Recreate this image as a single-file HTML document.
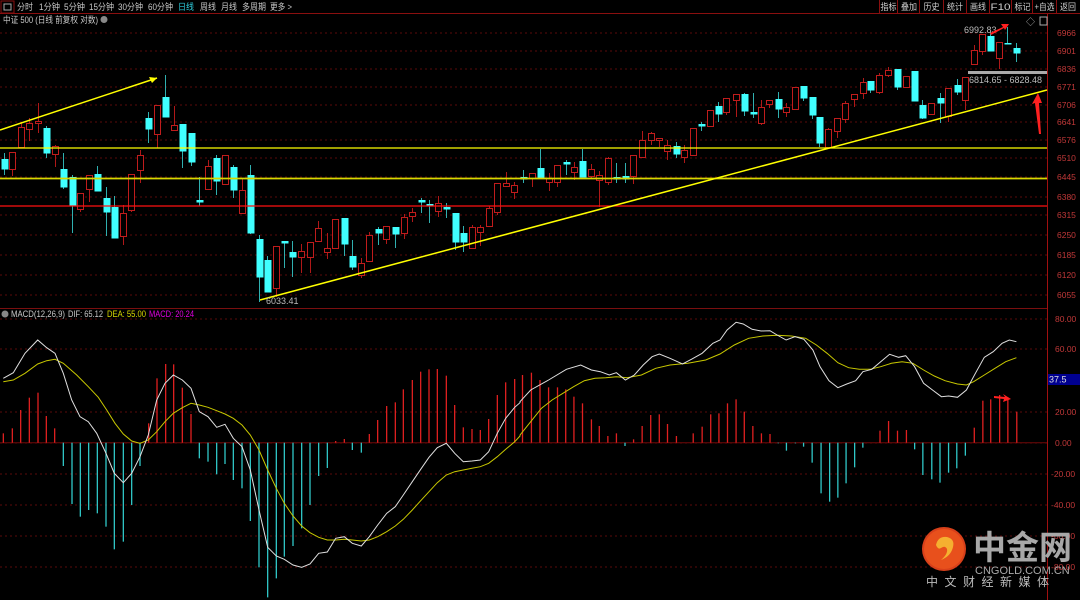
<!DOCTYPE html>
<html><head><meta charset="utf-8"><style>
body{margin:0;background:#000;width:1080px;height:600px;overflow:hidden;font-family:"Liberation Sans","Noto Sans CJK SC",sans-serif}
svg{position:absolute;left:0;top:0}
</style></head><body>
<svg id="s" width="1080" height="600" xmlns="http://www.w3.org/2000/svg" font-family="Liberation Sans, Noto Sans CJK SC, sans-serif">
<rect width="1080" height="600" fill="#000"/>
<line x1="0" y1="13.5" x2="1080" y2="13.5" stroke="#8a0f0f"/>
<rect x="1" y="1" width="13" height="12" fill="none" stroke="#8a0f0f"/>
<rect x="4" y="4" width="7" height="6" fill="none" stroke="#aaa"/>
<g font-size="9" fill="#c8c8c8" lengthAdjust="spacingAndGlyphs">
<text x="17" y="10" textLength="16" lengthAdjust="spacingAndGlyphs">分时</text>
<text x="39" y="10" textLength="21" lengthAdjust="spacingAndGlyphs">1分钟</text>
<text x="64" y="10" textLength="21" lengthAdjust="spacingAndGlyphs">5分钟</text>
<text x="89" y="10" textLength="25" lengthAdjust="spacingAndGlyphs">15分钟</text>
<text x="118" y="10" textLength="25" lengthAdjust="spacingAndGlyphs">30分钟</text>
<text x="148" y="10" textLength="25" lengthAdjust="spacingAndGlyphs">60分钟</text>
<text x="178" y="10" fill="#2fd0e0" textLength="16" lengthAdjust="spacingAndGlyphs">日线</text>
<text x="200" y="10" textLength="16" lengthAdjust="spacingAndGlyphs">周线</text>
<text x="221" y="10" textLength="16" lengthAdjust="spacingAndGlyphs">月线</text>
<text x="242" y="10" textLength="24" lengthAdjust="spacingAndGlyphs">多周期</text>
<text x="270" y="10" textLength="22" lengthAdjust="spacingAndGlyphs">更多 &gt;</text>
<text x="3" y="23" textLength="95" lengthAdjust="spacingAndGlyphs">中证 500 (日线 前复权 对数)</text>
</g>
<circle cx="104" cy="19.5" r="3.5" fill="#888"/>
<g font-size="9" fill="#d0d0d0" id="rtb"></g>
<line x1="0" y1="308.5" x2="1047" y2="308.5" stroke="#7a0f0f"/>
<line x1="1047.5" y1="14" x2="1047.5" y2="600" stroke="#a01010"/>
<g id="grid"></g>
<g id="c"></g>
<line x1="0" y1="148" x2="1047" y2="148" stroke="#ffff00" stroke-width="1.3"/>
<line x1="0" y1="178.5" x2="1047" y2="178.5" stroke="#d8d800" stroke-width="1.8"/>
<line x1="0" y1="206" x2="1047" y2="206" stroke="#ff1010" stroke-width="1.3"/>
<line x1="0" y1="130" x2="157" y2="78" stroke="#ffff00" stroke-width="1.5"/>
<polygon points="157,78 149,77 152,83" fill="#ffff00"/>
<line x1="260" y1="300" x2="1047" y2="90" stroke="#ffff00" stroke-width="1.5"/>
<rect x="968" y="71" width="79" height="3" fill="#aaa"/>
<g font-size="9" fill="#bbb">
<text x="964" y="33">6992.83</text>
<text x="969" y="83">6814.65 - 6828.48</text>
<text x="266" y="304">6033.41</text>
</g>
<polygon points="990,33 1003,27 1001,24 1009,24 1005,30 1004,28 991,35" fill="#ff2020"/>
<polygon points="1039,134 1035,103 1032,104 1038,93 1042,103 1039,103 1041,134" fill="#ff2020"/>
<text x="1026" y="25" font-size="9" fill="#aaa">◇</text>
<rect x="1040" y="17" width="7" height="8" fill="none" stroke="#aaa"/>
<circle cx="5" cy="314" r="3.5" fill="#888"/>
<g font-size="9">
<text x="11" y="317" fill="#c8c8c8" textLength="54" lengthAdjust="spacingAndGlyphs">MACD(12,26,9)</text>
<text x="68" y="317" fill="#c8c8c8" textLength="35" lengthAdjust="spacingAndGlyphs">DIF: 65.12</text>
<text x="107" y="317" fill="#d8d800" textLength="39" lengthAdjust="spacingAndGlyphs">DEA: 55.00</text>
<text x="149" y="317" fill="#e000e0" textLength="45" lengthAdjust="spacingAndGlyphs">MACD: 20.24</text>
</g>
<g id="m"></g>
<rect x="1048" y="374" width="32" height="11" fill="#000090"/>
<text x="1049" y="382.5" font-size="9" fill="#ddd">37.5</text>
<polygon points="994,396 1005,397 1003,394 1011,399 1003,402 1004,399 994,398" fill="#ff2020"/>
<circle cx="944" cy="549" r="22" fill="#d8401a"/>
<circle cx="944" cy="549" r="20" fill="#e8501c"/>
<path d="M936,545 q2,-9 11,-8 q8,2 6,10 q-2,9 -12,13 q7,-6 6,-11 q-2,-4 -6,-1 q-3,2 -5,-3z" fill="#f5b030"/>
<text x="973" y="559" font-size="33" font-weight="bold" fill="#a8a8a8" font-family="Noto Sans CJK SC, sans-serif">中金网</text>
<text x="975" y="574" font-size="11" fill="#aaa">CNGOLD.COM.CN</text>
<text x="926" y="586" font-size="12" fill="#bbb" letter-spacing="6.5" font-family="Noto Sans CJK SC, sans-serif">中文财经新媒体</text>
</svg>
<script>
var NS="http://www.w3.org/2000/svg";
function el(p,t,a,txt){var e=document.createElementNS(NS,t);for(var k in a)e.setAttribute(k,a[k]);if(txt)e.textContent=txt;document.getElementById(p).appendChild(e);return e;}
var tb=[["指标",880,897],["叠加",898,920],["历史",920,943],["统计",944,966],["画线",967,989],["F10",990,1011],["标记",1012,1033],["+自选",1033,1056],["返回",1057,1079]];
tb.forEach(function(b){var w=b[0].length>2?20:(b[0]=="F10"?14:16);el("rtb","text",{x:b[1]+(b[2]-b[1]-w)/2,y:10,textLength:w,lengthAdjust:"spacingAndGlyphs"},b[0]);el("rtb","line",{x1:b[1]-0.5,y1:0,x2:b[1]-0.5,y2:13,stroke:"#8a0f0f"});});
var ax=[[6966,33],[6901,51],[6836,69],[6771,87],[6706,105],[6641,122],[6576,140],[6510,158],[6445,177],[6380,197],[6315,215],[6250,235],[6185,255],[6120,275],[6055,295]];
ax.forEach(function(a){el("grid","line",{x1:0,y1:a[1],x2:1047,y2:a[1],stroke:"#5a0a0a","stroke-dasharray":"2,3"});el("grid","text",{x:1057,y:a[1]+3,"font-size":8.5,fill:"#c03838"},a[0]);});
var mx=[["80.00",319],["60.00",349],["20.00",412],["0.00",443],["-20.00",474],["-40.00",505],["-60.00",536],["-80.00",567]];
mx.forEach(function(a){el("grid","line",{x1:0,y1:a[1],x2:1047,y2:a[1],stroke:"#5a0a0a","stroke-dasharray":"2,3"});el("grid","text",{x:a[0].length>5?1051:1055,y:a[1]+3,"font-size":8.5,fill:"#c03838"},a[0]);});
el("grid","line",{x1:0,y1:442.7,x2:1047,y2:442.7,stroke:"#700808"});
var C=[[4,159,169,153,175,0],[12,152,169,152,176,1],[21,127,147,122,147,1],[29,123,129,118,141,1],[38,121,123,103,133,1],[46,128,153,126,158,0],[55,146,154,145,167,1],[63,169,187,153,189,0],[72,177,206,175,233,0],[80,193,209,193,212,1],[89,175,189,175,202,1],[97,174,191,166,191,0],[106,198,212,187,236,0],[114,207,238,196,238,0],[123,213,236,205,245,1],[131,174,210,174,212,1],[140,155,170,150,183,1],[148,118,129,112,143,0],[157,105,134,105,148,1],[165,97,117,75,117,0],[174,125,130,106,130,1],[182,124,151,124,168,0],[191,133,162,133,166,0],[199,200,202,177,206,0],[208,166,189,160,189,1],[216,158,181,155,195,0],[225,155,184,155,184,1],[233,167,190,165,198,0],[242,190,213,179,213,1],[250,175,233,165,234,0],[259,239,277,235,302,0],[267,260,292,256,292,0],[276,246,288,246,297,1],[284,241,243,241,268,0],[292,252,257,241,277,0],[301,251,257,244,273,1],[310,242,257,242,273,1],[318,228,241,221,241,1],[327,248,252,233,259,1],[335,219,248,219,248,1],[344,218,244,218,256,0],[352,256,267,240,270,0],[361,263,275,258,278,1],[369,235,261,232,261,1],[378,229,233,227,245,0],[386,226,239,226,244,1],[395,227,234,227,248,0],[404,217,233,214,239,1],[412,212,216,208,222,1],[421,200,202,198,213,0],[429,204,206,200,223,0],[438,203,211,196,217,1],[446,207,209,203,218,0],[455,213,242,213,250,0],[463,233,242,226,252,0],[472,227,248,225,248,1],[480,227,232,225,246,1],[489,208,226,206,226,1],[497,183,212,183,215,1],[506,183,186,172,187,1],[514,185,192,182,199,1],[523,177,179,170,183,0],[532,173,178,173,187,1],[540,168,178,149,178,0],[549,178,182,173,191,1],[557,165,182,165,187,1],[566,162,164,160,175,0],[574,167,172,162,180,1],[582,161,177,149,177,0],[591,169,176,164,179,1],[599,175,180,171,207,1],[608,158,182,157,185,1],[616,177,179,163,183,0],[625,176,179,163,183,0],[633,155,176,155,184,1],[642,140,157,131,157,1],[651,133,140,132,145,1],[659,138,140,138,147,1],[667,145,151,140,160,1],[676,146,154,142,158,0],[684,150,157,145,163,1],[693,128,155,128,155,1],[701,124,126,122,131,0],[710,110,126,110,126,1],[718,106,114,102,122,0],[726,98,112,98,115,1],[736,94,100,94,117,1],[744,94,111,93,116,0],[753,112,114,93,118,0],[761,107,123,100,125,1],[769,100,104,100,108,1],[778,99,109,92,118,0],[786,107,112,103,117,1],[795,87,109,87,109,1],[803,86,98,86,101,0],[812,97,115,97,119,0],[819,117,143,117,147,0],[828,129,147,128,147,1],[837,118,131,118,138,1],[845,103,119,101,123,1],[854,94,99,94,107,1],[863,82,93,78,99,1],[870,81,90,81,93,0],[879,75,92,73,94,1],[888,70,75,67,77,1],[897,69,87,69,90,0],[906,76,87,76,87,1],[914,71,101,71,101,0],[922,105,118,100,119,0],[931,103,114,103,114,1],[940,98,103,93,123,0],[948,88,116,88,122,1],[957,85,92,79,95,0],[965,77,100,77,110,1],[974,50,64,45,64,1],[982,34,51,34,55,1],[990,36,51,32,51,0],[999,42,58,42,69,1],[1007,43,44,27,44,0],[1016,48,53,43,62,0]];
C.forEach(function(c){var x=c[0],col=c[5]?"#e02020":"#40ffff",wk=c[5]?"#b01818":"#30b0b0";
el("c","line",{x1:x+0.5,y1:c[3],x2:x+0.5,y2:c[4],stroke:wk});
var h=Math.max(1,c[2]-c[1]);
if(c[5])el("c","rect",{x:x-2.5,y:c[1]+0.5,width:6,height:h,fill:"#000",stroke:"#c01c1c"});
else el("c","rect",{x:x-2.5,y:c[1],width:7,height:h+0.5,fill:col});});
var B1=[[10,370],[37,355],[62,300],[88,263],[114,248],[139,318],[164,355],[190,468],[216,582],[241,620],[266,600],[292,610],[318,650],[343,718],[370,695],[395,585],[420,468],[446,340],[471,205],[497,162],[521,163],[547,233],[573,312],[598,445],[624,455],[650,493],[675,462],[700,510],[726,535],[751,633],[777,772],[803,862],[829,805],[853,740],[879,708],[905,655],[930,585],[956,498],[982,474],[1007,393],[1033,387],[1057,420],[1084,428],[1108,372],[1133,330],[1160,288],[1186,277],[1210,238],[1237,210],[1262,185],[1287,178],[1312,177],[1339,197],[1364,285],[1390,352],[1416,357],[1441,360],[1466,327],[1492,255],[1517,217],[1544,207]];
var B2=[[7,195],[32,188],[56,210],[80,232],[105,232],[128,238],[151,260],[175,280],[200,328],[222,348],[246,378],[270,370],[294,408],[318,388],[342,348],[366,315],[390,313],[413,342],[438,378],[485,370],[510,350],[534,313],[557,310],[581,280],[605,268],[628,305],[652,348],[676,370],[700,372],[723,400],[746,422],[771,400],[794,410],[818,458],[843,550],[867,575],[890,563],[913,520],[937,472],[960,413],[1008,362],[1032,333],[1057,362],[1082,360],[1105,418],[1128,495],[1153,508],[1176,518],[1200,488],[1223,475],[1247,437],[1272,353],[1296,272],[1318,268],[1343,255],[1366,262],[1391,305]];
function bar(x,y){var z=442.7;if(Math.abs(y-z)<0.5)return;var up=y<z;el("m","line",{x1:x,y1:z,x2:x,y2:y,stroke:up?"#e02020":"#30c8c8","stroke-width":1.3});}
B1.forEach(function(b){bar(b[0]/3,310+b[1]/3);});
B2.forEach(function(b){bar(520+b[0]/2.8,310+b[1]/3);});
function pl(a,sx,ox){return a.map(function(q){return (ox+q[0]/sx).toFixed(1)+","+(310+q[1]/3).toFixed(1)}).join(" ");}
var D1=[[10,205],[40,188],[75,130],[113,90],[140,113],[165,130],[190,190],[215,270],[240,320],[265,335],[290,370],[318,430],[343,490],[370,518],[395,490],[420,440],[445,375],[470,270],[495,220],[520,195],[547,210],[573,235],[598,305],[624,320],[650,352],[675,343],[700,385],[726,410],[751,480],[777,600],[803,712],[829,738],[853,748],[879,765],[905,772],[930,762],[956,730],[982,726],[1007,685],[1033,680],[1057,700],[1084,708],[1108,680],[1133,645],[1160,610],[1186,590],[1210,555],[1237,515],[1262,478],[1287,442],[1312,413],[1339,400],[1364,430],[1390,455],[1416,453],[1441,450],[1466,425],[1492,370],[1517,325],[1544,292],[1560,278]];
var E1=[[10,215],[40,210],[75,190],[113,162],[140,152],[165,148],[190,160],[230,195],[265,230],[295,262],[320,300],[345,340],[370,372],[395,393],[420,400],[445,390],[470,365],[495,335],[520,310],[547,293],[573,280],[598,285],[624,292],[650,302],[675,312],[700,325],[726,345],[751,375],[777,420],[803,480],[829,535],[853,580],[879,618],[905,648],[930,668],[956,682],[982,690],[1007,690],[1033,688],[1057,690],[1084,693],[1108,690],[1133,680],[1160,665],[1186,648],[1210,628],[1237,600],[1262,572],[1287,545],[1312,518],[1339,495],[1364,485],[1390,480],[1416,475],[1441,470],[1466,460],[1492,440],[1517,418],[1544,395],[1560,378]];
var D2=[[0,275],[30,240],[80,210],[130,178],[170,165],[200,180],[225,185],[250,195],[270,188],[295,210],[320,195],[345,165],[370,140],[390,132],[420,145],[455,162],[480,148],[510,130],[540,100],[560,90],[580,60],[605,37],[625,42],[650,58],[675,63],[700,62],[720,75],[745,90],[770,80],[795,88],[820,120],[840,170],[865,212],[890,233],[915,222],[940,212],[960,185],[985,178],[1010,155],[1035,133],[1060,142],[1080,137],[1105,170],[1130,220],[1155,240],[1180,260],[1200,258],[1225,262],[1250,240],[1275,190],[1300,142],[1325,125],[1350,100],[1370,90],[1390,95]];
var E2=[[0,375],[30,335],[60,295],[90,270],[120,250],[150,230],[180,212],[210,205],[240,203],[270,200],[300,203],[340,195],[380,175],[420,165],[470,160],[520,150],[560,132],[600,105],[640,85],[680,78],[720,76],[760,78],[800,85],[830,105],[860,130],[890,158],[920,173],[950,178],[980,178],[1010,170],[1040,160],[1070,155],[1100,160],[1130,180],[1160,198],[1190,212],[1225,222],[1250,225],[1270,215],[1300,195],[1330,175],[1360,155],[1390,143]];
el("m","polyline",{points:pl(E1,3,0)+" "+pl(E2,2.8,520),fill:"none",stroke:"#c8c800","stroke-width":1});
el("m","polyline",{points:pl(D1,3,0)+" "+pl(D2,2.8,520),fill:"none",stroke:"#e0e0e0","stroke-width":1});
</script>
</body></html>
